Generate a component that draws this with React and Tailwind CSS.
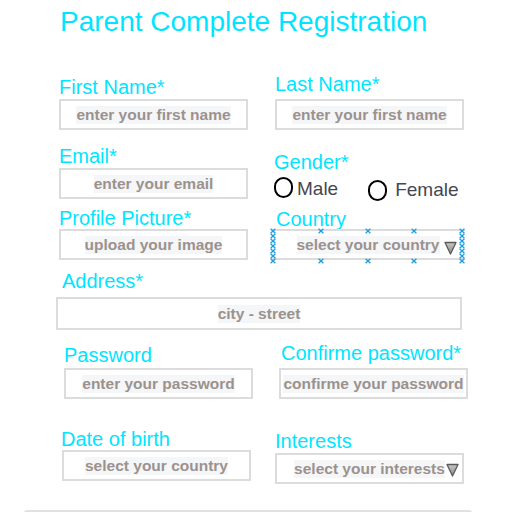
import React from "react";

const Label = ({ children, className = "" }) => (
  <div className={"text-[20px] leading-[23px] text-[#00e5ff] whitespace-nowrap " + className}>{children}</div>
);

const Ph = ({ children }) => (
  <span className="bg-[#f5f6f8] text-[#9b928e] font-bold text-[15.5px] leading-[18px] whitespace-nowrap">{children}</span>
);

const Input = ({ children, className = "" }) => (
  <div className={"relative h-[31px] w-[189px] border-2 border-[#dcdcdc] bg-white flex items-center justify-center " + className}>
    {children}
  </div>
);

const Tri = ({ className = "" }) => (
  <svg className={className} width="13" height="14" viewBox="0 0 13 14">
    <defs>
      <linearGradient id="tg" x1="0" y1="0" x2="0" y2="1">
        <stop offset="0" stopColor="#c8c8c8" />
        <stop offset="1" stopColor="#8a8a8a" />
      </linearGradient>
    </defs>
    <polygon points="1,1.5 12,1.5 6.5,13" fill="url(#tg)" stroke="#5a5a5a" strokeWidth="1.3" strokeLinejoin="round" />
  </svg>
);

const Mark = ({ x, y }) => (
  <g stroke="#1b9fe2" strokeWidth="1.3">
    <line x1={x - 2.4} y1={y - 2.2} x2={x + 2.4} y2={y + 2.2} />
    <line x1={x - 2.4} y1={y + 2.2} x2={x + 2.4} y2={y - 2.2} />
  </g>
);

const Handles = () => {
  const col = [0, 5, 10, 15, 20, 25, 30];
  return (
    <svg className="absolute left-[-2px] top-[-3px]" width="200" height="38" viewBox="0 0 200 38">
      {col.map((d) => (
        <Mark key={"l" + d} x={4} y={3 + d} />
      ))}
      {col.map((d) => (
        <Mark key={"r" + d} x={193} y={3 + d} />
      ))}
      {[52, 99, 145].map((x) => (
        <Mark key={"t" + x} x={x} y={3} />
      ))}
      {[52, 99, 145].map((x) => (
        <Mark key={"b" + x} x={x} y={33} />
      ))}
    </svg>
  );
};

const Radio = ({ className = "" }) => (
  <div className={"h-[21px] w-[19px] rounded-full border-2 border-black " + className} />
);

export default function App() {
  return (
    <div className="w-[528px] h-[512px] overflow-hidden bg-white font-['Liberation_Sans',Arial,sans-serif]">
      <h1 className="ml-[60px] mt-[6px] text-[28px] leading-[32px] text-[#00e5ff] font-normal whitespace-nowrap">
        Parent Complete Registration
      </h1>

      {/* Row 1 */}
      <div className="mt-[35px] flex items-end">
        <div className="ml-[59px] flex flex-col">
          <Label>First Name*</Label>
          <Input>
            <Ph>enter your first name</Ph>
          </Input>
        </div>
        <div className="ml-[27px] flex flex-col">
          <Label className="mb-[3px]">Last Name*</Label>
          <Input>
            <Ph>enter your first name</Ph>
          </Input>
        </div>
      </div>

      {/* Row 2 */}
      <div className="mt-[15px] flex items-start">
        <div className="ml-[59px] flex flex-col">
          <Label>Email*</Label>
          <Input>
            <Ph>enter your email</Ph>
          </Input>
        </div>
        <div className="ml-[26px] mt-[6px] flex flex-col">
          <Label>Gender*</Label>
          <div className="mt-[3px] flex items-start text-[19px] leading-[22px] text-[#464652]">
            <Radio />
            <span className="ml-[4px] mt-[1px]">Male</span>
            <Radio className="ml-[30px] mt-[3px]" />
            <span className="ml-[8px] mt-[2px]">Female</span>
          </div>
        </div>
      </div>

      {/* Row 3 */}
      <div className="mt-[6px] flex items-start">
        <div className="ml-[59px] flex flex-col">
          <Label>Profile Picture*</Label>
          <Input className="mt-[-1px]">
            <Ph>upload your image</Ph>
          </Input>
        </div>
        <div className="ml-[23px] mt-[1px] flex flex-col">
          <Label className="ml-[5px]">Country</Label>
          <div className="relative mt-[-2px] h-[31px] w-[194px] border-y-2 border-[#dcdcdc] bg-white flex items-center justify-center">
            <Ph>select your country</Ph>
            <Tri className="absolute right-[8px] top-[10px]" />
            <Handles />
          </div>
        </div>
      </div>

      {/* Row 4 */}
      <div className="mt-[10px] flex flex-col">
        <Label className="ml-[62px]">Address*</Label>
        <Input className="ml-[56px] mt-[4px] h-[33px] w-[406px]">
          <Ph>city - street</Ph>
        </Input>
      </div>

      {/* Row 5 */}
      <div className="mt-[12px] flex items-end">
        <div className="ml-[64px] flex flex-col">
          <Label>Password</Label>
          <Input className="mt-[1px]">
            <Ph>enter your password</Ph>
          </Input>
        </div>
        <div className="ml-[26px] flex flex-col">
          <Label className="ml-[2px] mb-[3px]">Confirme password*</Label>
          <Input>
            <Ph>confirme your password</Ph>
          </Input>
        </div>
      </div>

      {/* Row 6 */}
      <div className="mt-[29px] flex items-start">
        <div className="ml-[61px] flex flex-col">
          <Label>Date of birth</Label>
          <Input className="ml-[1px] mt-[-1px]">
            <Ph>select your country</Ph>
          </Input>
        </div>
        <div className="ml-[24px] mt-[2px] flex flex-col">
          <Label>Interests</Label>
          <Input className="mt-[0px]">
            <Ph>select your interests</Ph>
            <Tri className="absolute right-[3px] top-[8px]" />
          </Input>
        </div>
      </div>

      <div className="ml-[24px] mt-[26px] h-[10px] w-[448px] rounded-t-[3px] border-t-2 border-x border-[#e1e1e1]" />
    </div>
  );
}
